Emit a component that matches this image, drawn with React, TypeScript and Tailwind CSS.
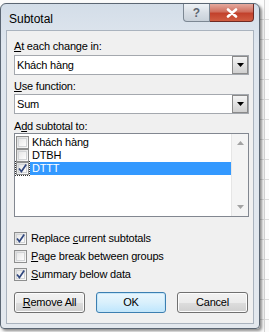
import * as React from "react"

const font = { fontFamily: '"Liberation Sans", Arial, sans-serif' }

function Check({ checked = false }: { checked?: boolean }) {
  return (
    <span className="relative flex h-[13px] w-[13px] shrink-0 items-center justify-center border border-[#8e8f8f] bg-[linear-gradient(135deg,#dcdcdc,#fbfbfb)]">
      <span className="absolute inset-[1px] border border-[#d2d4d6] bg-[linear-gradient(135deg,#e7e7e7,#fdfdfd)]" />
      {checked ? (
        <svg viewBox="0 0 11 11" className="relative h-[11px] w-[11px]">
          <path d="M2 5.5 L4.4 8.5 L9.2 1.6" fill="none" stroke="#31487f" strokeWidth="1.7" />
        </svg>
      ) : null}
    </span>
  )
}

function Combo({ value }: { value: string }) {
  return (
    <div className="flex h-[20px] w-[235px] items-center border border-[#a4a8ae] bg-white">
      <span className="flex-1 pl-[2px] text-[11px] tracking-[-0.2px] text-black">{value}</span>
      <span className="mr-[0px] flex h-[18px] w-[16px] items-center justify-center border border-[#8a8a8a] bg-[linear-gradient(#f4f4f4,#e2e2e2_50%,#d0d0d0)]">
        <svg viewBox="0 0 7 4" className="h-[4px] w-[7px]">
          <path d="M0 0 H7 L3.5 4 Z" fill="#000" />
        </svg>
      </span>
    </div>
  )
}

function Btn({ children, primary = false }: { children: React.ReactNode; primary?: boolean }) {
  return (
    <div
      className={
        primary
          ? "flex h-[21px] w-[70px] items-center justify-center rounded-[3px] border border-[#3c7fb1] bg-[linear-gradient(#eaf6fd,#d9f0fc_50%,#bee6fd)] text-[11px] tracking-[-0.2px] shadow-[inset_0_0_0_1px_#c6e6f8]"
          : "flex h-[21px] w-[71px] items-center justify-center rounded-[3px] border border-[#707070] bg-[linear-gradient(#f2f2f2,#ebebeb_50%,#dddddd_51%,#cfcfcf)] text-[11px] tracking-[-0.2px] shadow-[inset_0_0_0_1px_#fcfcfc]"
      }
    >
      {children}
    </div>
  )
}

export default function App() {
  const items = [
    { label: "Khách hàng", checked: false },
    { label: "DTBH", checked: false },
    { label: "DTTT", checked: true, selected: true },
  ]
  return (
    <div
      className="flex h-[332px] w-[269px] overflow-hidden bg-[#fbfbfb] bg-[linear-gradient(90deg,transparent_264px,#d4d4d4_264px,#d4d4d4_265px,transparent_265px),repeating-linear-gradient(transparent_0px,transparent_19px,#dcdcdc_19px,#dcdcdc_20px)]"
      style={font}
    >
      <div className="relative mt-[3px] flex h-[326px] w-[260px] shrink-0 flex-col rounded-t-[6px] rounded-b-[4px] border border-[#5b6673] bg-[linear-gradient(#d3dde8,#dfe6ee_40px,#e3e8ee)] px-[5px] pb-[4px] shadow-[2px_2px_3px_rgba(0,0,0,0.45)]">
        <div className="flex h-[26px] items-start">
          <span className="pl-[3px] pt-[6px] text-[12px] text-black">Subtotal</span>
        </div>
        <div className="absolute right-[5px] top-0 flex h-[18px]">
          <div className="flex w-[27px] items-center justify-center rounded-bl-[4px] border border-t-0 border-[#7c8793] bg-[linear-gradient(#eef2f6,#d8dee5_50%,#c8d0d9)] text-[12px] font-bold text-[#5d6570]">
            ?
          </div>
          <div className="flex w-[44px] items-center justify-center rounded-br-[4px] border border-l-0 border-t-0 border-[#6e2a24] bg-[linear-gradient(#e5a99e,#d0705f_45%,#c2412c_55%,#d05d42)]">
            <svg viewBox="0 0 12 10" className="h-[10px] w-[12px]">
              <path d="M2 1.5 L10 8.5 M10 1.5 L2 8.5" stroke="#fff" strokeWidth="2.6" strokeLinecap="round" />
            </svg>
          </div>
        </div>
        <div className="flex flex-1 flex-col border border-[#aab3be] bg-[#f0f0f0] pl-[7px] text-black">
          <div className="mt-[8px] h-[15px] text-[11px] leading-[15px] tracking-[-0.2px]">
            <u>A</u>t each change in:
          </div>
          <div className="mt-[1px]">
            <Combo value="Khách hàng" />
          </div>
          <div className="mt-[4px] h-[15px] text-[11px] leading-[15px] tracking-[-0.2px]">
            <u>U</u>se function:
          </div>
          <Combo value="Sum" />
          <div className="mt-[5px] h-[14px] text-[11px] leading-[14px] tracking-[-0.2px]">
            A<u>d</u>d subtotal to:
          </div>
          <div className="flex h-[84px] w-[235px] border border-[#828790] bg-white">
            <div className="flex flex-1 flex-col pt-[2px]">
              {items.map((it) => (
                <div key={it.label} className="flex h-[13px] items-center">
                  <span
                    className={
                      it.selected
                        ? "ml-[0px] flex h-[15px] w-[15px] items-center justify-center outline-1 outline-dotted outline-[#333] -outline-offset-1"
                        : "ml-[0px] flex h-[15px] w-[15px] items-center justify-center"
                    }
                  >
                    <Check checked={it.checked} />
                  </span>
                  <span
                    className={
                      it.selected
                        ? "flex h-[13px] flex-1 items-center bg-[#3399ff] pl-[2px] text-[11px] tracking-[-0.2px] text-white"
                        : "flex h-[13px] flex-1 items-center pl-[2px] text-[11px] tracking-[-0.2px]"
                    }
                  >
                    {it.label}
                  </span>
                </div>
              ))}
            </div>
            <div className="flex w-[17px] flex-col items-center justify-between border-l border-[#e6e6e6] bg-[#f4f4f4] py-[7px]">
              <svg viewBox="0 0 7 4" className="h-[4px] w-[7px]">
                <path d="M0 4 H7 L3.5 0 Z" fill="#a3a3a3" />
              </svg>
              <svg viewBox="0 0 7 4" className="h-[4px] w-[7px]">
                <path d="M0 0 H7 L3.5 4 Z" fill="#a3a3a3" />
              </svg>
            </div>
          </div>
          <div className="mt-[12px] flex flex-col text-[11px] tracking-[-0.2px]">
            <div className="flex h-[18px] items-center gap-[4px]">
              <Check checked />
              <span>
                Replace <u>c</u>urrent subtotals
              </span>
            </div>
            <div className="flex h-[18px] items-center gap-[4px]">
              <Check />
              <span>
                <u>P</u>age break between groups
              </span>
            </div>
            <div className="flex h-[18px] items-center gap-[4px]">
              <Check checked />
              <span>
                <u>S</u>ummary below data
              </span>
            </div>
          </div>
          <div className="mt-[9px] flex gap-[11px]">
            <Btn>
              <u>R</u>emove All
            </Btn>
            <Btn primary>OK</Btn>
            <Btn>Cancel</Btn>
          </div>
        </div>
      </div>
    </div>
  )
}
